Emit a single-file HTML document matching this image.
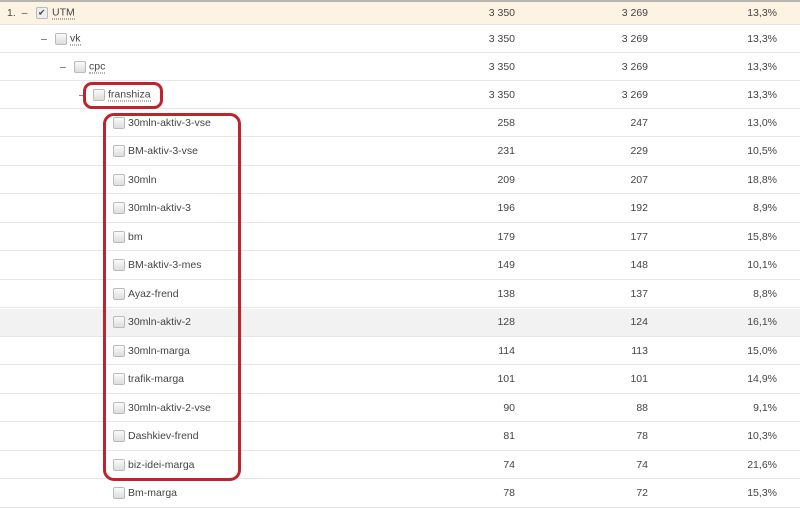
<!DOCTYPE html><html><head><style>
body{margin:0;width:800px;height:505px;overflow:hidden;background:#fff;font-family:"Liberation Sans",sans-serif;font-size:10.5px;color:#444;position:relative}
.top{position:absolute;left:0;top:0;width:800px;height:2px;background:#b8b4b0}
.r{position:absolute;left:0;width:800px;height:28px;border-bottom:1px solid #e6e6e6;box-sizing:border-box}
.r span{position:absolute;top:50%;transform:translateY(-50%);white-space:nowrap}
.n1{right:285px}.n2{right:152px}.n3{right:23px}
.cb{position:absolute;top:50%;margin-top:-6px;width:10px;height:10px;border:1px solid #bbb;border-radius:2px;background:linear-gradient(#fafafa,#ddd)}
.u{border-bottom:1px dotted #666}
.box{position:absolute;border:3px solid #c0232e;border-radius:9px;box-sizing:border-box}
</style></head><body>
<div class="top"></div>
<div class="r" style="top:2px;height:23px;background:#fdf3e3"><span style="left:7px">1. &nbsp;–</span><div class="cb" style="left:36px;background:#eee"></div><span style="left:38px;font-size:9px">✔</span><span class="u" style="left:52px">UTM</span><span class="n1">3 350</span><span class="n2">3 269</span><span class="n3">13,3%</span></div>
<div class="r" style="top:25px"><span style="left:41px">–</span><div class="cb" style="left:55px"></div><span class="u" style="left:70px">vk</span><span class="n1">3 350</span><span class="n2">3 269</span><span class="n3">13,3%</span></div>
<div class="r" style="top:53px"><span style="left:60px">–</span><div class="cb" style="left:74px"></div><span class="u" style="left:89px">cpc</span><span class="n1">3 350</span><span class="n2">3 269</span><span class="n3">13,3%</span></div>
<div class="r" style="top:81px"><span style="left:79px">–</span><div class="cb" style="left:93px"></div><span class="u" style="left:108px">franshiza</span><span class="n1">3 350</span><span class="n2">3 269</span><span class="n3">13,3%</span></div>
<div id="rows"></div>
<div class="r" style="top:109px"><div class="cb" style="left:113px"></div><span style="left:128px">30mln-aktiv-3-vse</span><span class="n1">258</span><span class="n2">247</span><span class="n3">13,0%</span></div>
<div class="r" style="top:137.5px"><div class="cb" style="left:113px"></div><span style="left:128px">BM-aktiv-3-vse</span><span class="n1">231</span><span class="n2">229</span><span class="n3">10,5%</span></div>
<div class="r" style="top:166px"><div class="cb" style="left:113px"></div><span style="left:128px">30mln</span><span class="n1">209</span><span class="n2">207</span><span class="n3">18,8%</span></div>
<div class="r" style="top:194.5px"><div class="cb" style="left:113px"></div><span style="left:128px">30mln-aktiv-3</span><span class="n1">196</span><span class="n2">192</span><span class="n3">8,9%</span></div>
<div class="r" style="top:223px"><div class="cb" style="left:113px"></div><span style="left:128px">bm</span><span class="n1">179</span><span class="n2">177</span><span class="n3">15,8%</span></div>
<div class="r" style="top:251.5px"><div class="cb" style="left:113px"></div><span style="left:128px">BM-aktiv-3-mes</span><span class="n1">149</span><span class="n2">148</span><span class="n3">10,1%</span></div>
<div class="r" style="top:280px"><div class="cb" style="left:113px"></div><span style="left:128px">Ayaz-frend</span><span class="n1">138</span><span class="n2">137</span><span class="n3">8,8%</span></div>
<div class="r" style="top:308.5px;background:#f2f2f2"><div class="cb" style="left:113px"></div><span style="left:128px">30mln-aktiv-2</span><span class="n1">128</span><span class="n2">124</span><span class="n3">16,1%</span></div>
<div class="r" style="top:337px"><div class="cb" style="left:113px"></div><span style="left:128px">30mln-marga</span><span class="n1">114</span><span class="n2">113</span><span class="n3">15,0%</span></div>
<div class="r" style="top:365.5px"><div class="cb" style="left:113px"></div><span style="left:128px">trafik-marga</span><span class="n1">101</span><span class="n2">101</span><span class="n3">14,9%</span></div>
<div class="r" style="top:394px"><div class="cb" style="left:113px"></div><span style="left:128px">30mln-aktiv-2-vse</span><span class="n1">90</span><span class="n2">88</span><span class="n3">9,1%</span></div>
<div class="r" style="top:422.5px"><div class="cb" style="left:113px"></div><span style="left:128px">Dashkiev-frend</span><span class="n1">81</span><span class="n2">78</span><span class="n3">10,3%</span></div>
<div class="r" style="top:451px"><div class="cb" style="left:113px"></div><span style="left:128px">biz-idei-marga</span><span class="n1">74</span><span class="n2">74</span><span class="n3">21,6%</span></div>
<div class="r" style="top:479.5px"><div class="cb" style="left:113px"></div><span style="left:128px">Bm-marga</span><span class="n1">78</span><span class="n2">72</span><span class="n3">15,3%</span></div>
<div class="box" style="left:83px;top:82px;width:80px;height:27px"></div>
<div class="box" style="left:103px;top:113px;width:138px;height:368px;border-radius:11px"></div>
</body></html>
